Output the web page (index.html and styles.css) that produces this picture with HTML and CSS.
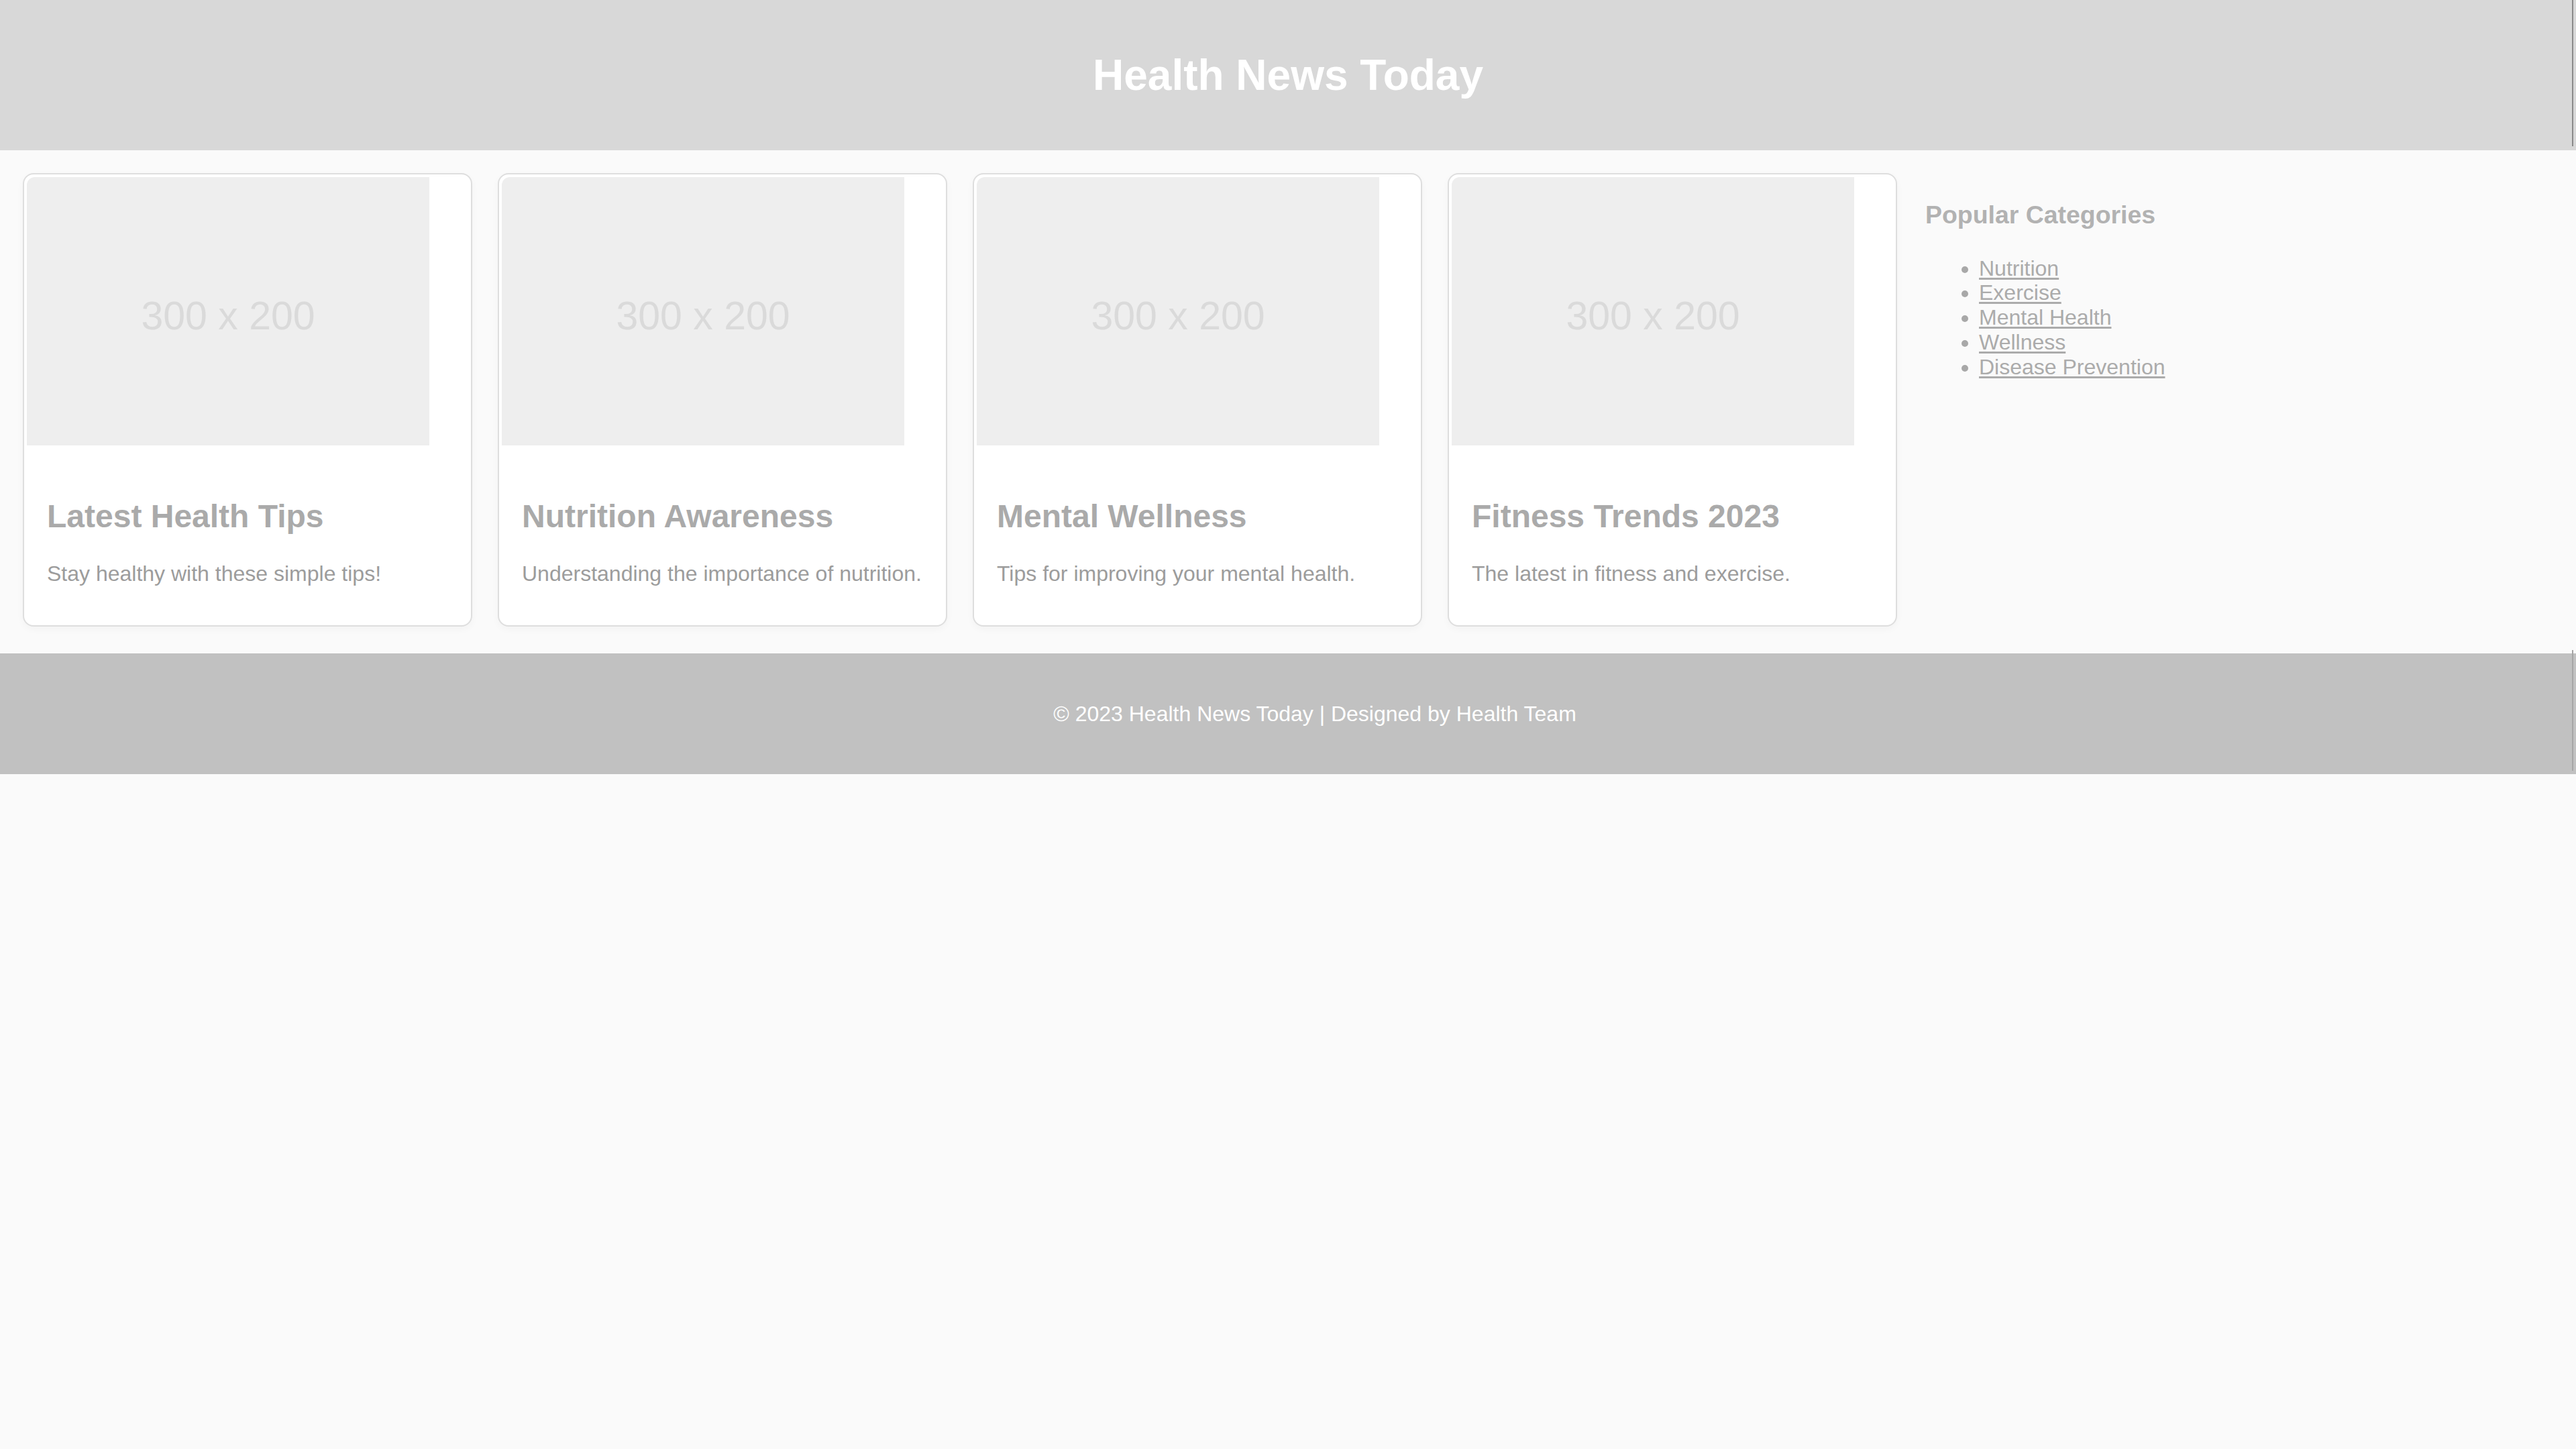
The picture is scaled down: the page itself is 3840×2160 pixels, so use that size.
FILE: index.html
```html
<!DOCTYPE html>
<html lang="en">
<head>
<meta charset="utf-8">
<title>Health News Today</title>
<link rel="stylesheet" href="styles.css">
</head>
<body>
<header class="site-header">
  <h1 class="site-title">Health News Today</h1>
</header>
<main class="main">
  <article class="card">
    <div class="thumb">300 x 200</div>
    <div class="card-body">
      <h2 class="card-title">Latest Health Tips</h2>
      <p class="card-text">Stay healthy with these simple tips!</p>
    </div>
  </article>
  <article class="card">
    <div class="thumb">300 x 200</div>
    <div class="card-body">
      <h2 class="card-title">Nutrition Awareness</h2>
      <p class="card-text">Understanding the importance of nutrition.</p>
    </div>
  </article>
  <article class="card">
    <div class="thumb">300 x 200</div>
    <div class="card-body">
      <h2 class="card-title">Mental Wellness</h2>
      <p class="card-text">Tips for improving your mental health.</p>
    </div>
  </article>
  <article class="card">
    <div class="thumb">300 x 200</div>
    <div class="card-body">
      <h2 class="card-title">Fitness Trends 2023</h2>
      <p class="card-text">The latest in fitness and exercise.</p>
    </div>
  </article>
  <aside class="sidebar">
    <h3 class="sidebar-title">Popular Categories</h3>
    <ul class="cat-list">
      <li><a class="cat-link" href="#">Nutrition</a></li>
      <li><a class="cat-link" href="#">Exercise</a></li>
      <li><a class="cat-link" href="#">Mental Health</a></li>
      <li><a class="cat-link" href="#">Wellness</a></li>
      <li><a class="cat-link" href="#">Disease Prevention</a></li>
    </ul>
  </aside>
</main>
<footer class="site-footer">
  <p class="footer-text">© 2023 Health News Today | Designed by Health Team</p>
</footer>
</body>
</html>
```

FILE: styles.css
```css
* {
  box-sizing: border-box;
}

html, body {
  margin: 0;
  padding: 0;
}

body {
  background: #fafafa;
  font-family: "Liberation Sans", Arial, sans-serif;
  font-size: 32px;
  color: #999;
}

.site-header {
  position: relative;
  background: #d8d8d8;
  padding: 32px;
  text-align: center;
}

.site-header::after {
  content: "";
  position: absolute;
  right: 4px;
  top: 0;
  bottom: 6px;
  width: 2px;
  background: #8a8a8a;
}

.site-title {
  margin: 44px 0 42px;
  font-size: 64px;
  font-weight: bold;
  line-height: 1.15;
  color: #ffffff;
}

.main {
  display: flex;
  align-items: flex-start;
  gap: 38px;
  padding: 34px 0 40px 34px;
}

.card {
  flex: 0 0 670px;
  width: 670px;
  background: #ffffff;
  border: 2px solid #dedede;
  border-radius: 16px;
  padding: 4px 4px 0 4px;
  box-shadow: 0 4px 12px rgba(0, 0, 0, 0.03);
}

.thumb {
  width: 600px;
  height: 400px;
  padding-top: 14px;
  background: #eeeeee;
  border-top-left-radius: 12px;
  display: flex;
  align-items: center;
  justify-content: center;
  font-size: 59px;
  color: #dadada;
}

.card-body {
  padding: 38px 8px 26px 30px;
}

.card-title {
  margin: 40px 0;
  font-size: 48px;
  font-weight: bold;
  line-height: 1.15;
  color: #aaaaaa;
}

.card-text {
  margin: 32px 0;
  font-size: 32px;
  line-height: 1.15;
  color: #9c9c9c;
  white-space: nowrap;
}

.sidebar {
  flex: 1;
  padding: 4px 4px 0 4px;
}

.sidebar-title {
  margin: 37px 0 40px;
  font-size: 37.44px;
  font-weight: bold;
  line-height: 1.15;
  color: #b2b2b2;
}

.cat-list {
  margin: 32px 0;
  padding-left: 80px;
  list-style: disc;
  line-height: 1.15;
  color: #a8a8a8;
}

.cat-link {
  color: #ababab;
  text-decoration: underline;
  text-decoration-thickness: 3px;
  text-underline-offset: 3px;
}

.site-footer {
  position: relative;
  background: #c1c1c1;
  padding: 40px 40px 40px 120px;
  text-align: center;
}

.site-footer::after {
  content: "";
  position: absolute;
  right: 4px;
  top: -5px;
  bottom: 5px;
  width: 2px;
  background: #a6a6a6;
}

.footer-text {
  margin: 32px 0;
  font-size: 32px;
  line-height: 1.15;
  color: #ffffff;
}
```
